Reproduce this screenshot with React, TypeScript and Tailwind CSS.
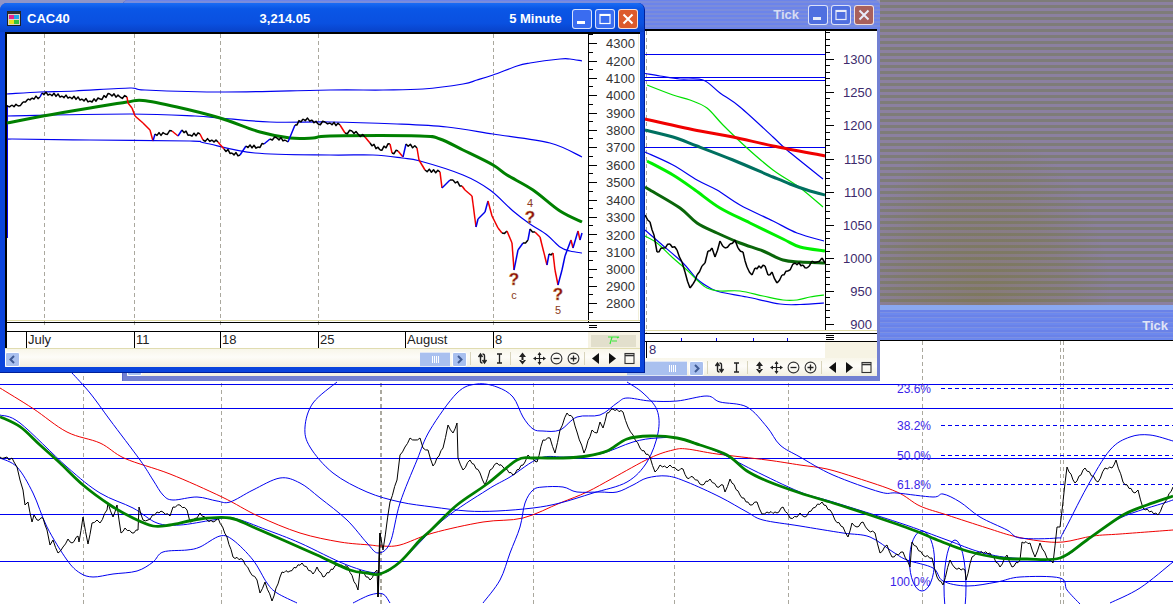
import type { ReactNode } from "react";

type Pt = [number, number];

const toStr = (pts: Pt[]) => pts.map((p) => p.join(",")).join(" ");

// catmull-rom through the traced points, the indicators are all soft curves
function curve(pts: Pt[]) {
  let d = `M${pts[0][0]} ${pts[0][1]}`;
  for (let i = 0; i < pts.length - 1; i++) {
    const p0 = pts[Math.max(i - 1, 0)];
    const p1 = pts[i];
    const p2 = pts[i + 1];
    const p3 = pts[Math.min(i + 2, pts.length - 1)];
    const c1x = p1[0] + (p2[0] - p0[0]) / 6;
    const c1y = p1[1] + (p2[1] - p0[1]) / 6;
    const c2x = p2[0] - (p3[0] - p1[0]) / 6;
    const c2y = p2[1] - (p3[1] - p1[1]) / 6;
    d += ` C${c1x.toFixed(1)} ${c1y.toFixed(1)} ${c2x.toFixed(1)} ${c2y.toFixed(1)} ${p2[0]} ${p2[1]}`;
  }
  return d;
}

function Line({ pts, color = "#0000f0", w = 1.2 }: { pts: Pt[]; color?: string; w?: number }) {
  return <path d={curve(pts)} fill="none" stroke={color} strokeWidth={w} strokeLinejoin="round" />;
}

// price line: falling legs go red, rising legs go blue, the rest stays hairy black
function Price({ pts, w = 1.5, amp = 1.4, mono = false }: { pts: Pt[]; w?: number; amp?: number; mono?: boolean }) {
  return (
    <g>
      {pts.slice(1).map((b, i) => {
        const a = pts[i];
        const slope = (b[1] - a[1]) / Math.max(b[0] - a[0], 1);
        const color = mono ? "#000000" : slope > 0.8 ? "#f00000" : slope < -0.8 ? "#0000e8" : "#000000";
        const seg: Pt[] = [a];
        if (color === "#000000") {
          const n = Math.floor((b[0] - a[0]) / 2);
          for (let k = 1; k < n; k++) {
            const t = k / n;
            seg.push([a[0] + (b[0] - a[0]) * t, a[1] + (b[1] - a[1]) * t + (k % 2 ? amp : -amp)]);
          }
        }
        seg.push(b);
        return <polyline key={i} points={toStr(seg)} fill="none" stroke={color} strokeWidth={w} strokeLinejoin="round" />;
      })}
    </g>
  );
}

function VDash({ x, y1, y2, w = 1 }: { x: number; y1: number; y2: number; w?: number }) {
  return <line x1={x} x2={x} y1={y1} y2={y2} stroke="#aaa89e" strokeWidth={w} strokeDasharray="4 3" shapeRendering="crispEdges" />;
}

function HLine({ y, x1 = 0, x2 = 1173 }: { y: number; x1?: number; x2?: number }) {
  return <line x1={x1} x2={x2} y1={y} y2={y} stroke="#0000f0" shapeRendering="crispEdges" />;
}

/* ---------- title bar bits ---------- */

function WinButtons({ faded }: { faded?: boolean }) {
  const blue = faded ? "bg-[#4f6fe0]" : "bg-[#3a6cf0]";
  const red = faded ? "bg-[#a8605c]" : "bg-[#dc5a2c]";
  const glyph = faded ? "#e8ecf8" : "#ffffff";
  const box = `w-[20px] h-[20px] rounded-[3px] border border-white/80 flex items-center justify-center`;
  return (
    <div className="flex gap-[3px]">
      <div className={`${box} ${blue}`}>
        <div className="w-[8px] h-[3px] mt-[8px] mr-[3px]" style={{ backgroundColor: glyph }} />
      </div>
      <div className={`${box} ${blue}`}>
        <svg width="12" height="12" viewBox="0 0 12 12">
          <rect x="1" y="1.5" width="10" height="9" fill="none" stroke={glyph} strokeWidth="1.2" />
          <rect x="1" y="1" width="10" height="2" fill={glyph} />
        </svg>
      </div>
      <div className={`${box} ${red}`}>
        <svg width="12" height="12" viewBox="0 0 12 12">
          <path d="M1.5 1.5 L10.5 10.5 M10.5 1.5 L1.5 10.5" stroke={glyph} strokeWidth="2" />
        </svg>
      </div>
    </div>
  );
}

function AppIcon() {
  return (
    <svg width="14" height="15" viewBox="0 0 14 15" className="shrink-0">
      <rect x="0.5" y="0.5" width="13" height="14" fill="#d8d4c8" stroke="#202020" />
      <rect x="0.5" y="0.5" width="13" height="2.5" fill="#303030" />
      <rect x="2" y="4" width="5" height="4" fill="#e8208c" />
      <rect x="7" y="4" width="5" height="4" fill="#20a8e8" />
      <rect x="2" y="9" width="5" height="4" fill="#e8e020" />
      <rect x="7" y="9" width="5" height="4" fill="#30c040" />
    </svg>
  );
}

/* ---------- scrollbar / toolbar ---------- */

function ToolIcon({ children }: { children: ReactNode }) {
  return (
    <div className="w-[17px] flex justify-center">
      <svg width="13" height="13" viewBox="0 0 13 13">
        {children}
      </svg>
    </div>
  );
}

function ScrollBtn({ dir }: { dir: "left" | "right" }) {
  return (
    <div className="w-[15px] h-[15px] mt-[3px] rounded-[2px] border border-white bg-[#a9c0ef] flex items-center justify-center shrink-0">
      <svg width="9" height="9" viewBox="0 0 9 9">
        <path d={dir === "left" ? "M6 1 L2.5 4.5 L6 8" : "M3 1 L6.5 4.5 L3 8"} fill="none" stroke="#3f5a94" strokeWidth="2" />
      </svg>
    </div>
  );
}

function Toolbar() {
  return (
    <div className="w-[170px] flex items-center shrink-0 text-[#222]">
      <div className="flex pl-[3px] pr-[2px] border-l border-[#d8d4bc]">
        <ToolIcon>
          <path d="M4.5 3 V9 Q4.5 11 6.5 11 M2.5 5 L4.5 2 L6.5 5 M8.5 10 V4 Q8.5 2 6.5 2 M6.5 8 L8.5 11 L10.5 8" fill="none" stroke="#222" strokeWidth="1.4" />
        </ToolIcon>
        <ToolIcon>
          <path d="M4 2 H9 M4 11 H9 M6.5 2 V11" fill="none" stroke="#222" strokeWidth="1.3" />
        </ToolIcon>
      </div>
      <div className="flex pl-[3px] border-l border-[#d8d4bc]">
        <ToolIcon>
          <path d="M6.5 0.5 L10 5 H3 Z M6.5 12.5 L10 8 H3 Z M5.5 4 H7.5 V9 H5.5 Z" fill="#222" />
        </ToolIcon>
        <ToolIcon>
          <path d="M6.5 1 V12 M1 6.5 H12" stroke="#222" strokeWidth="1.2" />
          <path d="M6.5 0 L8.5 3 H4.5 Z M6.5 13 L8.5 10 H4.5 Z M0 6.5 L3 4.5 V8.5 Z M13 6.5 L10 4.5 V8.5 Z" fill="#222" />
        </ToolIcon>
        <ToolIcon>
          <circle cx="6.5" cy="6.5" r="5.4" fill="none" stroke="#333" strokeWidth="1.1" />
          <path d="M3.5 6.5 H9.5" stroke="#222" strokeWidth="1.3" />
        </ToolIcon>
        <ToolIcon>
          <circle cx="6.5" cy="6.5" r="5.4" fill="none" stroke="#333" strokeWidth="1.1" />
          <path d="M3.5 6.5 H9.5 M6.5 3.5 V9.5" stroke="#222" strokeWidth="1.3" />
        </ToolIcon>
      </div>
      <div className="flex pl-[2px] ml-[2px] border-l border-[#d8d4bc]">
        <ToolIcon>
          <path d="M10 1 V12 L3 6.5 Z" fill="#111" />
        </ToolIcon>
        <ToolIcon>
          <path d="M3 1 V12 L10 6.5 Z" fill="#111" />
        </ToolIcon>
        <ToolIcon>
          <rect x="2" y="1.5" width="9" height="10" fill="none" stroke="#333" strokeWidth="1.1" />
          <path d="M2 3.5 H11" stroke="#333" strokeWidth="1.6" />
        </ToolIcon>
      </div>
    </div>
  );
}

function ScrollRow({ thumb, className }: { thumb: string; className: string }) {
  return (
    <div className={`flex items-center bg-[linear-gradient(180deg,#f8f6ea,#fdfcf8_45%,#f2efe0)] ${className}`}>
      <ScrollBtn dir="left" />
      <div className="flex-1" />
      <div className={`h-[15px] mt-[3px] ${thumb} bg-[#a9c0ef] flex items-center justify-end pr-[11px] gap-[1px] border-y border-[#dfe6f6] mr-[2px]`}>
        <div className="w-[1px] h-[7px] bg-white" />
        <div className="w-[1px] h-[7px] bg-white" />
        <div className="w-[1px] h-[7px] bg-white" />
        <div className="w-[1px] h-[7px] bg-white" />
      </div>
      <ScrollBtn dir="right" />
      <div className="w-[3px]" />
      <Toolbar />
    </div>
  );
}

/* ---------- CAC40 chart ---------- */

const cacAxis: [string, number][] = [
  ["4300", 43], ["4200", 61], ["4100", 78], ["4000", 95], ["3900", 113], ["3800", 130], ["3700", 147], ["3600", 165],
  ["3500", 182], ["3400", 200], ["3300", 217], ["3200", 234.5], ["3100", 251.5], ["3000", 269], ["2900", 286], ["2800", 303],
];

const cacPrice: Pt[] = [
  [7, 106], [12, 105], [18, 106], [23, 102], [28, 99], [32, 98], [40, 97], [42, 93], [50, 94], [62, 96], [70, 97], [82, 99], [90, 101],
  [100, 99], [110, 94], [120, 97], [127, 97], [128, 103], [132, 108], [135, 116], [143, 123], [150, 130], [153, 141], [155, 134],
  [165, 134], [172, 131], [178, 136], [182, 130], [190, 135], [200, 134], [203, 140], [212, 140], [218, 142], [224, 149], [232, 153],
  [240, 155], [246, 146], [258, 147], [264, 144], [270, 139], [277, 138], [285, 140], [288, 142], [295, 125], [303, 119], [312, 120],
  [318, 124], [325, 122], [330, 123], [340, 125], [345, 133], [352, 131], [358, 134], [365, 137], [370, 143], [380, 150], [390, 144],
  [392, 153], [398, 151], [403, 157], [406, 144], [417, 148], [419, 160], [425, 170], [440, 172], [442, 188], [450, 180], [453, 180],
  [462, 186], [465, 190], [472, 196], [476, 227], [478, 219], [485, 212], [488, 201], [492, 216], [498, 228], [502, 233], [507, 231],
  [512, 243], [514, 270], [518, 250], [523, 243], [528, 240], [530, 229], [535, 232], [540, 237], [547, 265], [549, 254], [553, 253],
  [555, 270], [558, 285], [562, 270], [565, 256], [571, 240], [573, 248], [578, 231], [580, 240], [582, 233],
];

function CacChart() {
  return (
    <svg width="633" height="297" viewBox="7 34 633 297" className="block">
      {[44, 134, 220, 318, 493].map((x) => (
        <VDash key={x} x={x} y1={34} y2={326} />
      ))}
      <line x1="7.5" x2="7.5" y1="105" y2="238" stroke="#0000f0" strokeWidth="1" />
      <Line pts={[[7, 94], [40, 92], [75, 91], [130, 88], [145, 90], [225, 92], [330, 90], [383, 90], [423, 89], [463, 84], [477, 80], [493, 75], [517, 66], [530, 63], [560, 59], [570, 59], [582, 61]]} />
      <Line pts={[[7, 116], [130, 114], [195, 116], [220, 118], [270, 122], [330, 122], [397, 124], [447, 127], [493, 134], [550, 143], [582, 157]]} />
      <Line pts={[[7, 140], [12, 139], [90, 140], [190, 141], [205, 143], [255, 153], [330, 155], [373, 155], [402, 158], [420, 161], [463, 175], [490, 190], [513, 211], [530, 224], [547, 235], [560, 247], [570, 251], [582, 253]]} />
      <Line color="#008000" w={3} pts={[[7, 123], [43, 116], [90, 108], [127, 102], [143, 100.5], [177, 107], [220, 118], [260, 132], [290, 138], [313, 138], [330, 136], [420, 136], [440, 139], [463, 150], [493, 165], [507, 175], [533, 190], [560, 211], [582, 222]]} />
      <Price pts={cacPrice} />
      <g className="text-[17px] font-bold" fill="#8b0a0a" stroke="#c89858" strokeWidth="0.5" textAnchor="middle">
        <text x="514" y="285">?</text>
        <text x="530" y="223">?</text>
        <text x="558" y="300">?</text>
      </g>
      <g className="text-[11px]" fill="#8a3a20" textAnchor="middle">
        <text x="514" y="299">c</text>
        <text x="530" y="207">4</text>
        <text x="558" y="314">5</text>
      </g>
      {/* right axis */}
      <line x1="588.5" x2="588.5" y1="34" y2="322" stroke="#000" shapeRendering="crispEdges" />
      {cacAxis.map(([label, y]) => (
        <g key={label}>
          <line x1="589" x2="597" y1={y} y2={y} stroke="#000" shapeRendering="crispEdges" />
          <line x1="589" x2="593" y1={y - 8.7} y2={y - 8.7} stroke="#000" shapeRendering="crispEdges" />
          <text x="635" y={y + 5} textAnchor="end" className="text-[13px]" fill="#333">{label}</text>
        </g>
      ))}
      <line x1="589" x2="593" y1="312" y2="312" stroke="#000" shapeRendering="crispEdges" />
      <line x1="7" x2="640" y1="320.5" y2="320.5" stroke="#dedaa4" shapeRendering="crispEdges" />
      <line x1="7" x2="640" y1="322.5" y2="322.5" stroke="#000" strokeWidth="1" shapeRendering="crispEdges" />
      <path d="M589 325 H597 M589 327.5 H597" stroke="#000" shapeRendering="crispEdges" />
      <line x1="638.5" x2="638.5" y1="34" y2="320" stroke="#f0eed8" />
    </svg>
  );
}

const cacDates: [string, string][] = [
  ["July", "w-[108px]"], ["11", "w-[86px]"], ["18", "w-[98px]"], ["25", "w-[87px]"], ["August", "w-[88px]"], ["8", "w-[95px]"],
];

function CacWindow() {
  return (
    <div className="absolute left-0 top-[3px] w-[645px] h-[370px] flex flex-col rounded-t-[7px] bg-[#0a44dc] border-r border-b border-[#00209a] overflow-hidden">
      <div className="h-[29px] flex items-center pl-[7px] pr-[6px] pt-[2px] text-white text-[13px] font-bold bg-[linear-gradient(180deg,#1a6cf4,#0a56e6_20%,#0a50e0_70%,#0842c8)] shrink-0">
        <AppIcon />
        <span className="ml-[6px] w-[233px]">CAC40</span>
        <span className="w-[250px]">3,214.05</span>
        <span className="w-[63px]">5 Minute</span>
        <WinButtons />
      </div>
      <div className="flex-1 flex flex-col ml-[5px] mr-[4px] mb-[5px] bg-white">
        <div className="border-l-2 border-t-2 border-black">
          <CacChart />
          <div className="flex h-[17px] border-t border-black bg-white text-[13px] leading-[16px] text-[#222]">
            <div className="w-[19px]" />
            {cacDates.map(([label, width]) => (
              <div key={label} className={`${width} border-l border-black pl-[1px]`}>{label}</div>
            ))}
            <div className="flex-1 bg-[#f6f3e4] pt-[3px] pl-[3px]">
              <div className="w-[45px] h-[12px] bg-[#e2dfcc] flex justify-center">
                <svg width="14" height="10" viewBox="0 0 14 10">
                  <path d="M1 2 H12 L10 3 M5 2 L3 9 M5 6 H10" fill="none" stroke="#38e838" strokeWidth="1.2" />
                </svg>
              </div>
            </div>
          </div>
        </div>
        <ScrollRow thumb="w-[30px]" className="h-[19px] border-t border-[#e0dcb0]" />
      </div>
    </div>
  );
}

/* ---------- Tick window (behind) ---------- */

const tickAxis: [string, number][] = [
  ["1300", 59], ["1250", 92], ["1200", 125], ["1150", 159], ["1100", 192], ["1050", 225], ["1000", 258], ["950", 291], ["900", 324],
];

const tickPrice: Pt[] = [
  [645, 215], [650, 222], [654, 235], [657, 252], [663, 248], [670, 244], [677, 250], [682, 262], [685, 272], [690, 288], [693, 284],
  [697, 275], [702, 266], [705, 263], [708, 251], [712, 248], [715, 257], [720, 241], [725, 248], [730, 244], [735, 240], [738, 248],
  [743, 252], [747, 267], [752, 275], [755, 268], [765, 266], [768, 275], [772, 272], [777, 283], [782, 275], [788, 271], [795, 263],
  [803, 265], [807, 268], [812, 261], [817, 262], [822, 258], [825, 263],
];

function TickChart() {
  return (
    <svg width="748" height="310" viewBox="129 31 748 310" className="block">
      <VDash x={646} y1={31} y2={333} />
      <HLine y={54} x1={645} x2={825} />
      <HLine y={77.5} x1={645} x2={825} />
      <HLine y={80} x1={645} x2={825} />
      <HLine y={147} x1={645} x2={825} />
      <Line pts={[[645, 73.5], [660, 76], [680, 79], [703, 80], [720, 93], [740, 107], [773, 137], [787, 150], [823, 179]]} />
      <Line color="#00e000" pts={[[647, 85], [673, 95], [690, 100], [707, 108], [723, 125], [747, 148], [773, 170], [793, 183], [803, 190], [823, 207]]} />
      <Line color="#f00000" w={3} pts={[[645, 119], [700, 131], [733, 137], [773, 146], [825, 156]]} />
      <Line color="#007060" w={3} pts={[[645, 130], [673, 137], [697, 146], [733, 160], [773, 177], [790, 184], [807, 190], [825, 195]]} />
      <Line pts={[[645, 152], [673, 165], [697, 180], [717, 190], [740, 205], [773, 221], [797, 233], [824, 241]]} />
      <Line color="#00f000" w={3} pts={[[647, 161], [673, 175], [695, 190], [720, 208], [750, 223], [783, 239], [800, 247], [825, 251]]} />
      <Line color="#0a660a" w={3} pts={[[645, 187], [650, 190], [680, 208], [697, 223], [717, 233], [740, 243], [763, 251], [783, 260], [800, 262], [825, 263]]} />
      <Line pts={[[645, 230], [660, 243], [683, 263], [697, 279], [710, 288], [720, 292], [747, 297], [780, 304], [800, 304.5], [824, 303]]} />
      <Line color="#00e000" pts={[[645, 236], [657, 243], [673, 258], [687, 270], [697, 280], [707, 288], [720, 291], [740, 291], [763, 296], [783, 300], [797, 300], [810, 297], [824, 295]]} />
      <Price mono w={1.5} amp={1.2} pts={tickPrice} />
      <line x1="825.5" x2="825.5" y1="31" y2="331" stroke="#000" shapeRendering="crispEdges" />
      {tickAxis.map(([label, y]) => (
        <g key={label}>
          <line x1="826" x2="834" y1={y} y2={y} stroke="#000" shapeRendering="crispEdges" />
          {[6.6, 13.2, 19.8, 26.4].map((d) => (
            <line key={d} x1="826" x2="830" y1={y - d} y2={y - d} stroke="#000" shapeRendering="crispEdges" />
          ))}
          <text x="872" y={y + 5} textAnchor="end" className="text-[13px]" fill="#3c2a6c">{label}</text>
        </g>
      ))}
      <line x1="645" x2="877" y1="330.5" y2="330.5" stroke="#dedaa4" shapeRendering="crispEdges" />
      <line x1="645" x2="877" y1="333.5" y2="333.5" stroke="#000" shapeRendering="crispEdges" />
      <path d="M826 335.5 H834 M826 337.5 H834 M826 339.5 H834" stroke="#000" shapeRendering="crispEdges" />
      {[681, 716, 753, 787].map((x) => (
        <line key={x} x1={x} x2={x} y1="338" y2="341" stroke="#0000f0" shapeRendering="crispEdges" />
      ))}
    </svg>
  );
}

function TickWindow() {
  return (
    <div className="absolute left-[122px] top-0 w-[758px] h-[381px] flex flex-col bg-[#7280d2] rounded-t-[6px] overflow-hidden border-l border-[#5a68c8]">
      <div className="h-[29px] shrink-0 flex items-center justify-end pr-[6px] text-[#d6dcf4] text-[13px] font-bold bg-[repeating-linear-gradient(0deg,#6c84ea_0_2px,#7a8cdc_2px_4px)]">
        <span className="mr-[9px]">Tick</span>
        <WinButtons faded />
      </div>
      <div className="flex-1 flex flex-col ml-[4px] mr-[3px] mb-[5px] bg-white">
        <div className="border-l-2 border-t-2 border-black">
          <TickChart />
          <div className="flex h-[17px] border-t border-black text-[13px] leading-[16px] text-[#3c2a6c]">
            <div className="w-[517px]" />
            <div className="w-[179px] border-l border-black pl-[2px]">8</div>
            <div className="flex-1 bg-[#f6f3e4]" />
          </div>
        </div>
        <ScrollRow thumb="w-[60px]" className="h-[18px]" />
      </div>
    </div>
  );
}

/* ---------- bottom chart, full width ---------- */

const bottomPrice: Pt[] = [
  [0, 457], [4, 458], [7, 457], [9, 460], [12, 458], [14, 462], [17, 467], [20, 480], [23, 490], [25, 505], [28, 502], [32, 522], [34, 515],
  [37, 520], [43, 518], [47, 530], [50, 545], [53, 540], [58, 553], [63, 547], [68, 539], [72, 543], [78, 536], [79, 542], [83, 517], [88, 544],
  [92, 523], [97, 520], [100, 523], [107, 510], [108, 503], [113, 517], [117, 505], [121, 533], [125, 528], [132, 533], [138, 530], [139, 507],
  [143, 520], [148, 520], [157, 512], [163, 512], [170, 516], [173, 507], [180, 505], [187, 510], [190, 522], [197, 518], [200, 513], [207, 520],
  [213, 522], [218, 518], [227, 537], [233, 557], [243, 560], [250, 572], [257, 580], [260, 593], [265, 582], [272, 601], [280, 577], [282, 572],
  [290, 571], [302, 563], [313, 574], [317, 567], [323, 577], [337, 565], [348, 567], [358, 590], [360, 570], [370, 580], [377, 570], [378, 597],
  [380, 533], [383, 550], [390, 502], [397, 480], [400, 455], [405, 447], [410, 438], [415, 440], [420, 438], [423, 448], [428, 450], [433, 466],
  [443, 448], [448, 425], [453, 433], [457, 423], [458, 458], [463, 470], [470, 460], [480, 473], [485, 485], [490, 470], [497, 463], [503, 467],
  [513, 475], [525, 462], [528, 455], [537, 462], [543, 440], [550, 438], [555, 453], [560, 430], [567, 413], [573, 418], [577, 432], [584, 453],
  [592, 430], [597, 433], [600, 422], [603, 428], [607, 413], [613, 409], [623, 412], [628, 427], [633, 435], [640, 448], [650, 457], [655, 472],
  [660, 465], [667, 468], [670, 465], [677, 470], [683, 469], [687, 478], [693, 477], [702, 485], [710, 479], [717, 487], [723, 485], [725, 492],
  [730, 479], [740, 495], [750, 505], [757, 502], [762, 514], [767, 512], [777, 513], [783, 507], [790, 518], [797, 517], [800, 513], [805, 517],
  [813, 508], [822, 502], [832, 513], [835, 520], [843, 527], [848, 537], [852, 523], [857, 527], [863, 522], [868, 530], [875, 533], [880, 553],
  [887, 545], [892, 557], [903, 552], [910, 567], [912, 542], [923, 555], [932, 558], [937, 577], [943, 585], [950, 560], [955, 568], [965, 570],
  [966, 580], [972, 557], [977, 552], [990, 553], [1000, 567], [1007, 555], [1012, 567], [1020, 560], [1022, 542], [1030, 543], [1035, 557],
  [1040, 543], [1047, 558], [1053, 563], [1057, 527], [1060, 527], [1067, 467], [1075, 483], [1085, 468], [1098, 482], [1105, 468], [1112, 468],
  [1116, 460], [1123, 482], [1135, 493], [1138, 490], [1143, 508], [1158, 515], [1165, 502], [1173, 487],
];

const fibs: [string, number, number][] = [
  ["23.6%", 388, 897], ["38.2%", 425, 897], ["50.0%", 455.5, 897], ["61.8%", 484, 897], ["100.0%", 581, 890],
];

function BottomChart() {
  return (
    <svg width="1173" height="263" viewBox="0 341 1173 263" className="block">
      {[83, 221, 533, 674, 788, 922, 1060, 1063].map((x) => (
        <VDash key={x} x={x} y1={341} y2={604} />
      ))}
      <VDash x={381} y1={341} y2={604} w={2} />
      <HLine y={384.5} />
      <HLine y={408.5} />
      <HLine y={458.5} />
      <HLine y={514.5} />
      <HLine y={561.5} />
      <HLine y={581.5} x1={943} />
      {fibs.slice(0, 4).map(([label, y]) => (
        <line key={label} x1="941" x2="1173" y1={y} y2={y} stroke="#0000f0" strokeDasharray="4 3" shapeRendering="crispEdges" />
      ))}
      {fibs.map(([label, y, x]) => (
        <text key={label} x={x} y={y + 4.5} className="text-[12px]" fill="#3a1fe8">{label}</text>
      ))}
      <Line color="#f00000" w={1} pts={[[0, 388], [33, 408.5], [67, 432], [100, 443], [125, 458.5], [170, 474], [222, 497], [258, 516], [300, 533], [340, 542], [370, 545], [381, 546], [400, 545], [433, 533], [483, 522], [523, 518], [560, 503], [587, 492], [613, 478], [650, 458], [673, 450], [687, 449], [717, 454], [767, 460], [800, 465], [827, 469], [857, 478], [897, 492], [920, 506], [947, 515], [987, 528], [1013, 536], [1040, 541], [1063, 542], [1093, 536], [1120, 534], [1173, 530]]} />
      <Line w={1} pts={[[72, 373], [90, 393], [110, 420], [140, 460], [153, 480], [163, 495], [173, 500], [197, 497], [217, 501], [230, 502], [253, 490], [280, 478], [300, 483], [320, 498], [347, 520], [367, 543], [378, 553], [390, 543], [400, 503], [417, 460], [430, 430], [457, 393], [477, 384], [497, 387], [513, 397], [523, 417], [533, 429], [543, 431], [560, 430], [577, 417], [600, 415], [617, 403], [627, 398], [650, 401], [677, 401], [707, 396], [720, 402], [747, 407], [767, 427], [780, 445], [800, 457], [833, 475], [880, 492], [897, 493], [933, 497], [943, 494], [960, 502], [980, 517], [1007, 530], [1020, 538], [1057, 538], [1063, 533], [1087, 487], [1110, 450], [1130, 437], [1150, 435], [1173, 441]]} />
      <Line w={1} pts={[[337, 382], [313, 403], [305, 427], [310, 447], [333, 473], [367, 492], [400, 502], [433, 507], [467, 511], [497, 511], [533, 508], [560, 503], [593, 493], [627, 482], [647, 462], [658, 433], [657, 410], [643, 393], [627, 382]]} />
      <Line w={1} pts={[[483, 603], [500, 580], [510, 553], [520, 527], [525, 503], [533, 490], [543, 487], [563, 487], [577, 492], [600, 492], [617, 492], [633, 485], [647, 478], [667, 476], [687, 482], [720, 497], [747, 512], [763, 520], [800, 526], [843, 533], [870, 537], [893, 552], [907, 560], [933, 568], [943, 581], [967, 586], [997, 582], [1020, 577], [1060, 578], [1067, 590], [1080, 604]]} />
      <Line w={1} pts={[[0, 458], [17, 467], [33, 493], [47, 527], [67, 560], [80, 573], [93, 577], [113, 574], [137, 571], [153, 562], [163, 552], [187, 550], [200, 547], [220, 536], [233, 540], [253, 560], [267, 583], [277, 593], [297, 603]]} />
      <Line w={1} pts={[[353, 603], [370, 595], [383, 594], [390, 603]]} />
      <Line w={1} pts={[[1110, 603], [1140, 588], [1173, 562]]} />
      <ellipse cx="922" cy="561" rx="12.5" ry="30" fill="none" stroke="#0000f0" />
      <ellipse cx="955" cy="587" rx="11" ry="47" fill="none" stroke="#0000f0" />
      <Line w={1} pts={[[0, 415], [20, 423], [67, 467], [100, 493], [133, 508], [157, 523], [180, 525], [213, 520], [233, 518], [267, 530], [300, 543], [347, 565], [380, 573], [400, 562], [443, 520], [487, 490], [510, 477], [540, 458], [567, 457], [600, 454], [633, 442], [657, 438], [683, 439], [720, 453], [753, 470], [800, 492], [833, 502], [900, 523], [947, 540], [980, 552], [1013, 558], [1060, 558], [1087, 540], [1120, 518], [1167, 502], [1173, 500]]} />
      <Price mono w={1} amp={0.9} pts={bottomPrice} />
      <line x1="378" x2="380" y1="597" y2="533" stroke="#000" strokeWidth="1.5" />
      <Line color="#008000" w={2.8} pts={[[0, 416.7], [20, 426.7], [40, 445], [60, 463], [83, 485], [110, 505], [133, 518], [153, 526], [170, 525], [200, 519], [230, 518], [253, 527], [283, 540], [317, 555], [350, 570], [367, 573], [380, 574], [400, 562], [420, 540], [430, 531], [457, 505], [487, 484], [517, 460], [533, 458], [563, 458], [587, 456], [607, 451], [627, 439], [650, 436], [677, 438], [700, 445], [727, 455], [747, 471], [767, 481], [800, 493], [833, 503], [873, 516], [913, 530], [940, 541], [967, 551], [1000, 558], [1027, 559], [1060, 558], [1087, 540], [1123, 515], [1147, 505], [1173, 496]]} />
    </svg>
  );
}

function BottomWindow() {
  return (
    <div className="absolute left-0 top-[305px] w-[1173px] h-[299px] flex flex-col bg-white">
      <div className="h-[36px] shrink-0 border-b border-black flex items-end justify-end pr-[5px] pb-[5px] text-[#e0e4f6] text-[13px] font-bold bg-[repeating-linear-gradient(0deg,#6c88ee_0_2px,#7c90e4_2px_3px,#6a82e8_3px_5px)] border-t-[5px] border-t-[#8aa8f0]">
        Tick
      </div>
      <BottomChart />
    </div>
  );
}

/* ---------- noisy desktop top right ---------- */

function Desktop() {
  return (
    <div className="absolute left-[880px] top-0 w-[293px] h-[305px] flex flex-col justify-end bg-[repeating-linear-gradient(0deg,#8b80a0_0_3px,#7e7c78_3px_6px)]">
      <div className="h-[170px] w-[230px] bg-[radial-gradient(ellipse_at_45%_100%,rgba(125,112,40,0.34),rgba(125,112,40,0.18)_45%,rgba(125,112,40,0)_72%)]" />
    </div>
  );
}

export default function App() {
  return (
    <div className="relative w-[1173px] h-[604px] overflow-hidden bg-[#8f95c8] font-['Liberation_Sans',Arial,sans-serif]">
      <Desktop />
      <BottomWindow />
      <TickWindow />
      <CacWindow />
    </div>
  );
}
